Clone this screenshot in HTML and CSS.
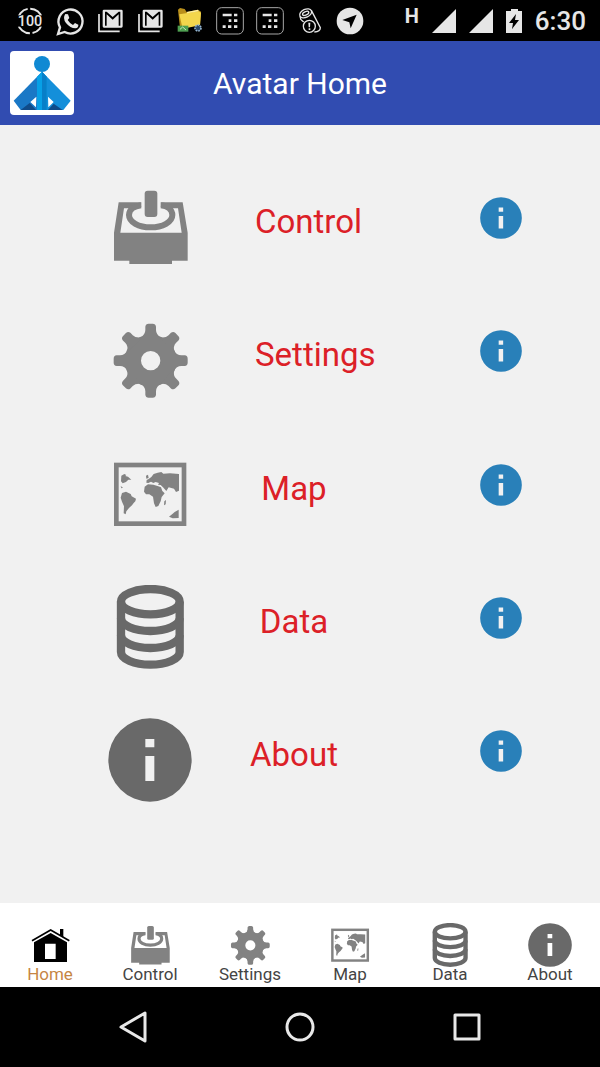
FILE: index.html
```html
<!DOCTYPE html>
<html lang="en">
<head>
    <meta charset="UTF-8">
    <meta name="viewport" content="width=device-width, initial-scale=1.0">
    <title>Avatar Home</title>
    <link rel="stylesheet" href="styles.css">
</head>
<body>
    <!-- shared icons -->
    <svg class="sprite" aria-hidden="true">
        <symbol id="icon-home" viewBox="84 84 132 132">
            <path d="M96 137L152 105L208 137" fill="none" stroke="currentColor" stroke-width="5"/>
            <path d="M180 102H190V126L180 120Z"/>
            <path fill-rule="evenodd" d="M102 142L152 114L201 142V201H102ZM135 146V192H167V146Z"/>
        </symbol>
        <symbol id="icon-control" viewBox="54 45 252 252">
            <rect x="164" y="62" width="38" height="79" rx="9"/>
            <path d="M86 97H154V111L132 115H102L91 188H275L264 115H234L212 111V97H278L293 188V272H246V282H118V272H72V188Z"/>
            <path d="M153 106C131 109 117 120 117 135C117 156 146 172 182 172C218 172 247 156 247 135C247 120 235 109 213 106" fill="none" stroke="currentColor" stroke-width="18"/>
        </symbol>
        <symbol id="icon-settings" viewBox="54 444 252 252">
            <path d="M182 494A78 78 0 1 1 182 650A78 78 0 1 1 182 494ZM182 543A29 29 0 1 0 182 601A29 29 0 1 0 182 543Z" fill-rule="evenodd"/>
            <g id="gear-side">
                <path id="tooth" d="M150 504Q166 494 166 480V470Q167 461 176 461H188Q197 461 198 470V480Q198 494 214 504Z"/>
                <use href="#tooth" transform="rotate(45 182 572)"/>
                <use href="#tooth" transform="rotate(90 182 572)"/>
                <use href="#tooth" transform="rotate(135 182 572)"/>
            </g>
            <use href="#gear-side" transform="rotate(180 182 572)"/>
        </symbol>
        <symbol id="icon-map" viewBox="54 33 252 252">
            <rect x="79" y="72" width="203" height="176" fill="none" stroke="currentColor" stroke-width="14"/>
            <path d="M94 104L103 99L109 102L106 105L114 107L124 116L115 116L108 123L98 127L93 121Z"/>
            <path d="M92 135L99 140L94 142Z"/>
            <path d="M96 156L108 152L122 159L125 166L138 173L136 181L131 186L126 193L117 201L109 211L107 220L101 217L102 196L96 182L92 170Z"/>
            <path d="M164 137L174 130L190 131L205 136L213 139L217 150L224 157L215 168L212 181L205 195L197 198L192 187L189 167L178 160L168 160L162 152Z"/>
            <path d="M169 125L170 117L176 114L184 108L191 99L203 95L214 93L220 98L240 97L267 99L267 149L258 153L252 143L244 141L236 139L229 150L219 139L212 132L204 131L207 126L197 123L190 126L183 122L175 126Z"/>
            <path d="M168 104L174 101L176 111L169 113Z"/>
            <path d="M223 181L228 177L227 190L222 193Z"/>
            <path d="M237 227L248 218L254 213L266 206V231L248 232Z"/>
        </symbol>
        <symbol id="icon-data" viewBox="54 435 252 252">
            <g fill="none" stroke="currentColor" stroke-width="25">
                <ellipse cx="181" cy="485" rx="88" ry="38"/>
                <path d="M93 485V636A88 38 0 0 0 269 636V485"/>
                <path d="M93 535A88 38 0 0 0 269 535"/>
                <path d="M93 586A88 38 0 0 0 269 586"/>
            </g>
        </symbol>
        <symbol id="icon-about" viewBox="54 54 252 252">
            <path fill-rule="evenodd" d="M180 55A125 125 0 1 1 180 305A125 125 0 1 1 180 55ZM166 117V142H193V117ZM166 168V243H193V168Z"/>
        </symbol>
        <symbol id="icon-mail" viewBox="270 0 120 120">
            <path d="M297 42V94H359" fill="none" stroke="currentColor" stroke-width="5"/>
            <path fill-rule="evenodd" d="M312 29H364Q368 29 368 33V79Q368 83 364 83H312Q308 83 308 79V33Q308 29 312 29ZM315 35V77H320V43L338 59L356 43V77H361V35H356L338 51L320 35Z"/>
        </symbol>
        <symbol id="icon-grid" viewBox="630 0 120 120">
            <rect x="650" y="23" width="80" height="79" rx="15" fill="none" stroke="#a8a8a8" stroke-width="3"/>
            <path d="M668 41H695V49H668ZM702 41H712V49H702ZM686 58H694V66H686ZM702 58H712V66H702ZM668 76H677V84H668ZM684 76H694V84H684ZM702 76H712V84H702Z"/>
        </symbol>
    </svg>

    <div class="status-bar">
        <div class="notifications">
            <svg viewBox="30 0 120 120">
                <circle cx="90" cy="63" r="37" fill="none" stroke="currentColor" stroke-width="6" stroke-dasharray="50 8"/>
                <rect x="48" y="46" width="84" height="34" fill="#000"/>
                <text x="90" y="79" text-anchor="middle" class="percent">100</text>
            </svg>
            <svg viewBox="150 0 120 120">
                <path d="M174 102L180 82A36 36 0 1 1 194 96Z" fill="none" stroke="currentColor" stroke-width="7"/>
                <path d="M196 42L204 43L208 54L203 60Q209 70 219 75L225 69L235 74Q236 83 226 85Q211 85 198 69Q187 54 196 42Z"/>
            </svg>
            <svg><use href="#icon-mail"/></svg>
            <svg><use href="#icon-mail"/></svg>
            <svg viewBox="510 0 120 120">
                <path d="M534 29L540 24L554 27L560 36L594 29L603 35L600 75L540 84Z" fill="#b98f1b"/>
                <path d="M538 43L596 34L603 38L600 76L548 86Z" fill="#f3d64c"/>
                <path d="M560 36L594 29L596 34L562 40Z" fill="#fff0a0"/>
                <path d="M533 77H565V95H533Z" fill="#4e9f51"/>
                <path d="M540 88L548 81L558 90" fill="none" stroke="#c5e7ba" stroke-width="3"/>
                <circle cx="594" cy="84" r="9" fill="#294a6c" stroke="#96b6cf" stroke-width="5" stroke-dasharray="5 3"/>
            </svg>
            <svg><use href="#icon-grid"/></svg>
            <svg><use href="#icon-grid"/></svg>
            <svg viewBox="-30 0 120 120">
                <g fill="none" stroke="currentColor" stroke-width="4">
                    <ellipse cx="17" cy="40" rx="19" ry="12" transform="rotate(-25 17 40)"/>
                    <ellipse cx="17" cy="40" rx="10" ry="5" transform="rotate(-25 17 40)"/>
                    <path d="M0 49L3 60M34 31L61 83Q61 94 43 96M4 60L11 66"/>
                    <circle cx="28" cy="79" r="18"/>
                </g>
                <path d="M25 68H31L30 82H26ZM26 85H31V90H26Z"/>
            </svg>
            <svg viewBox="90 0 120 120">
                <circle cx="150" cy="63" r="40"/>
                <path d="M127 60L170 44L152 85L148 67Z" fill="#000"/>
            </svg>
        </div>
        <div class="system">
            <span class="network">H</span>
            <svg class="signal" viewBox="0 0 24 24"><path d="M24 0V24H0Z"/></svg>
            <svg class="signal" viewBox="0 0 24 24"><path d="M24 0V24H0Z"/></svg>
            <svg class="battery" viewBox="0 0 16 24"><path fill-rule="evenodd" d="M5 0H12V2H16V24H0V2H5ZM10 5L3 14H7L6 20L13 11H9Z"/></svg>
            <span class="clock">6:30</span>
        </div>
    </div>

    <header class="app-header">
        <svg class="logo" viewBox="30 153 192 192" role="img" aria-label="Avatar logo">
            <circle cx="126" cy="192" r="24" fill="#1089d3"/>
            <path d="M126 215L41 302L62 330H126Z" fill="#1a78c6"/>
            <path d="M126 215L212 302L190 330H126Z" fill="#148fda"/>
            <path d="M126 215L140 230V330H111V230Z" fill="#07a0e6"/>
            <path d="M126 215L140 230V330H126Z" fill="#087fc8"/>
            <path d="M109 290L91 306L108 322ZM144 290L161 306L145 322Z" fill="#fff"/>
            <path d="M62 330L89 309L108 330ZM144 330L161 311L188 330Z" fill="#104b89"/>
        </svg>
        <h1>Avatar Home</h1>
    </header>

    <main class="menu">
        <div class="menu-row">
            <a href="#control" class="menu-link long"><svg class="icon"><use href="#icon-control"/></svg><span>Control</span></a>
            <button type="button" class="info" aria-label="About Control"><svg><use href="#icon-about"/></svg></button>
        </div>
        <div class="menu-row">
            <a href="#settings" class="menu-link long"><svg class="icon"><use href="#icon-settings"/></svg><span>Settings</span></a>
            <button type="button" class="info" aria-label="About Settings"><svg><use href="#icon-about"/></svg></button>
        </div>
        <div class="menu-row">
            <a href="#map" class="menu-link"><svg class="icon"><use href="#icon-map"/></svg><span>Map</span></a>
            <button type="button" class="info" aria-label="About Map"><svg><use href="#icon-about"/></svg></button>
        </div>
        <div class="menu-row">
            <a href="#data" class="menu-link"><svg class="icon dark"><use href="#icon-data"/></svg><span>Data</span></a>
            <button type="button" class="info" aria-label="About Data"><svg><use href="#icon-about"/></svg></button>
        </div>
        <div class="menu-row">
            <a href="#about" class="menu-link"><svg class="icon dark"><use href="#icon-about"/></svg><span>About</span></a>
            <button type="button" class="info" aria-label="More about this app"><svg><use href="#icon-about"/></svg></button>
        </div>
    </main>

    <nav class="tabs">
        <a href="#home" class="active"><svg class="icon"><use href="#icon-home"/></svg><span>Home</span></a>
        <a href="#control"><svg class="icon"><use href="#icon-control"/></svg><span>Control</span></a>
        <a href="#settings"><svg class="icon"><use href="#icon-settings"/></svg><span>Settings</span></a>
        <a href="#map"><svg class="icon"><use href="#icon-map"/></svg><span>Map</span></a>
        <a href="#data"><svg class="icon dark"><use href="#icon-data"/></svg><span>Data</span></a>
        <a href="#about"><svg class="icon dark"><use href="#icon-about"/></svg><span>About</span></a>
    </nav>

    <div class="system-nav">
        <button type="button" aria-label="Back"><svg viewBox="0 0 32 32"><path d="M4 16L28 2V30Z"/></svg></button>
        <button type="button" aria-label="Home screen"><svg viewBox="0 0 32 32"><circle cx="16" cy="16" r="13"/></svg></button>
        <button type="button" aria-label="Recent apps"><svg viewBox="0 0 32 32"><rect x="4" y="4" width="24" height="24"/></svg></button>
    </div>
</body>
</html>
```

FILE: styles.css
```css
* {
    box-sizing: border-box;
}

body {
    display: flex;
    flex-direction: column;
    min-height: 100vh;
    margin: 0;
    font-family: Roboto, "Liberation Sans", sans-serif;
    background-color: #f1f1f1;
}

svg {
    display: block;
    flex: none;
    fill: currentColor;
}

a {
    text-decoration: none;
}

button {
    padding: 0;
    border: none;
    background: none;
    cursor: pointer;
}

.sprite {
    position: absolute;
    width: 0;
    height: 0;
}

/* status bar */
.status-bar {
    display: flex;
    justify-content: space-between;
    height: 41px;
    padding: 0 14px 0 10px;
    background-color: #000;
    color: #e6e6e6;
}

.notifications {
    display: flex;
}

.notifications svg {
    width: 40px;
    height: 40px;
}

.percent {
    font-size: 43px;
    font-weight: 500;
}

.system {
    display: flex;
    align-items: center;
    gap: 13px;
}

.network {
    align-self: flex-start;
    padding-top: 6px;
    font-size: 20px;
    line-height: 20px;
    font-weight: 700;
}

.signal {
    width: 24px;
    height: 24px;
}

.battery {
    width: 16px;
    height: 24px;
}

.clock {
    font-size: 26px;
    font-weight: 500;
}

/* header */
.app-header {
    display: grid;
    grid-template-columns: 1fr auto 1fr;
    align-items: center;
    height: 84px;
    padding: 0 10px;
    background-color: #314cb1;
}

.logo {
    width: 64px;
    height: 64px;
    border-radius: 4px;
    background-color: #fff;
}

.app-header h1 {
    margin: 0;
    font-size: 30px;
    font-weight: 400;
    color: #fff;
}

/* menu */
.menu {
    display: flex;
    flex: 1;
    flex-direction: column;
    padding: 35px 13% 76px 18%;
}

.menu-row {
    display: flex;
    flex: 1;
    align-items: center;
    justify-content: space-between;
}

.menu-link {
    display: flex;
    align-items: center;
    gap: 58px;
    font-size: 33px;
    line-height: 40px;
    color: #dc2027;
}

.menu-link span {
    min-width: 88px;
    margin-bottom: 10px;
    text-align: center;
}

.menu-link.long span {
    padding-left: 5px;
}

.icon {
    width: 84px;
    height: 84px;
    color: #828282;
}

.icon.dark {
    color: #696969;
}

.info {
    margin-bottom: 18px;
    border-radius: 50%;
    color: #2980b9;
}

.info svg {
    width: 42px;
    height: 42px;
}

/* bottom tabs */
.tabs {
    display: grid;
    grid-template-columns: repeat(6, 1fr);
    padding: 20px 0 6px;
    background-color: #fff;
}

.tabs a {
    display: flex;
    flex-direction: column;
    align-items: center;
    font-size: 17px;
    line-height: 14px;
    color: #444;
}

.tabs .icon {
    width: 44px;
    height: 44px;
}

.tabs .active {
    color: #c68544;
}

.tabs .active .icon {
    color: #000;
}

/* android buttons */
.system-nav {
    display: grid;
    grid-template-columns: repeat(3, 1fr);
    justify-items: center;
    align-items: center;
    height: 80px;
    padding: 0 50px;
    background-color: #000;
    color: #e8e8e8;
}

.system-nav svg {
    width: 32px;
    height: 32px;
    fill: none;
    stroke: currentColor;
    stroke-width: 3;
    stroke-linejoin: round;
}

.system-nav button {
    color: inherit;
}
```
